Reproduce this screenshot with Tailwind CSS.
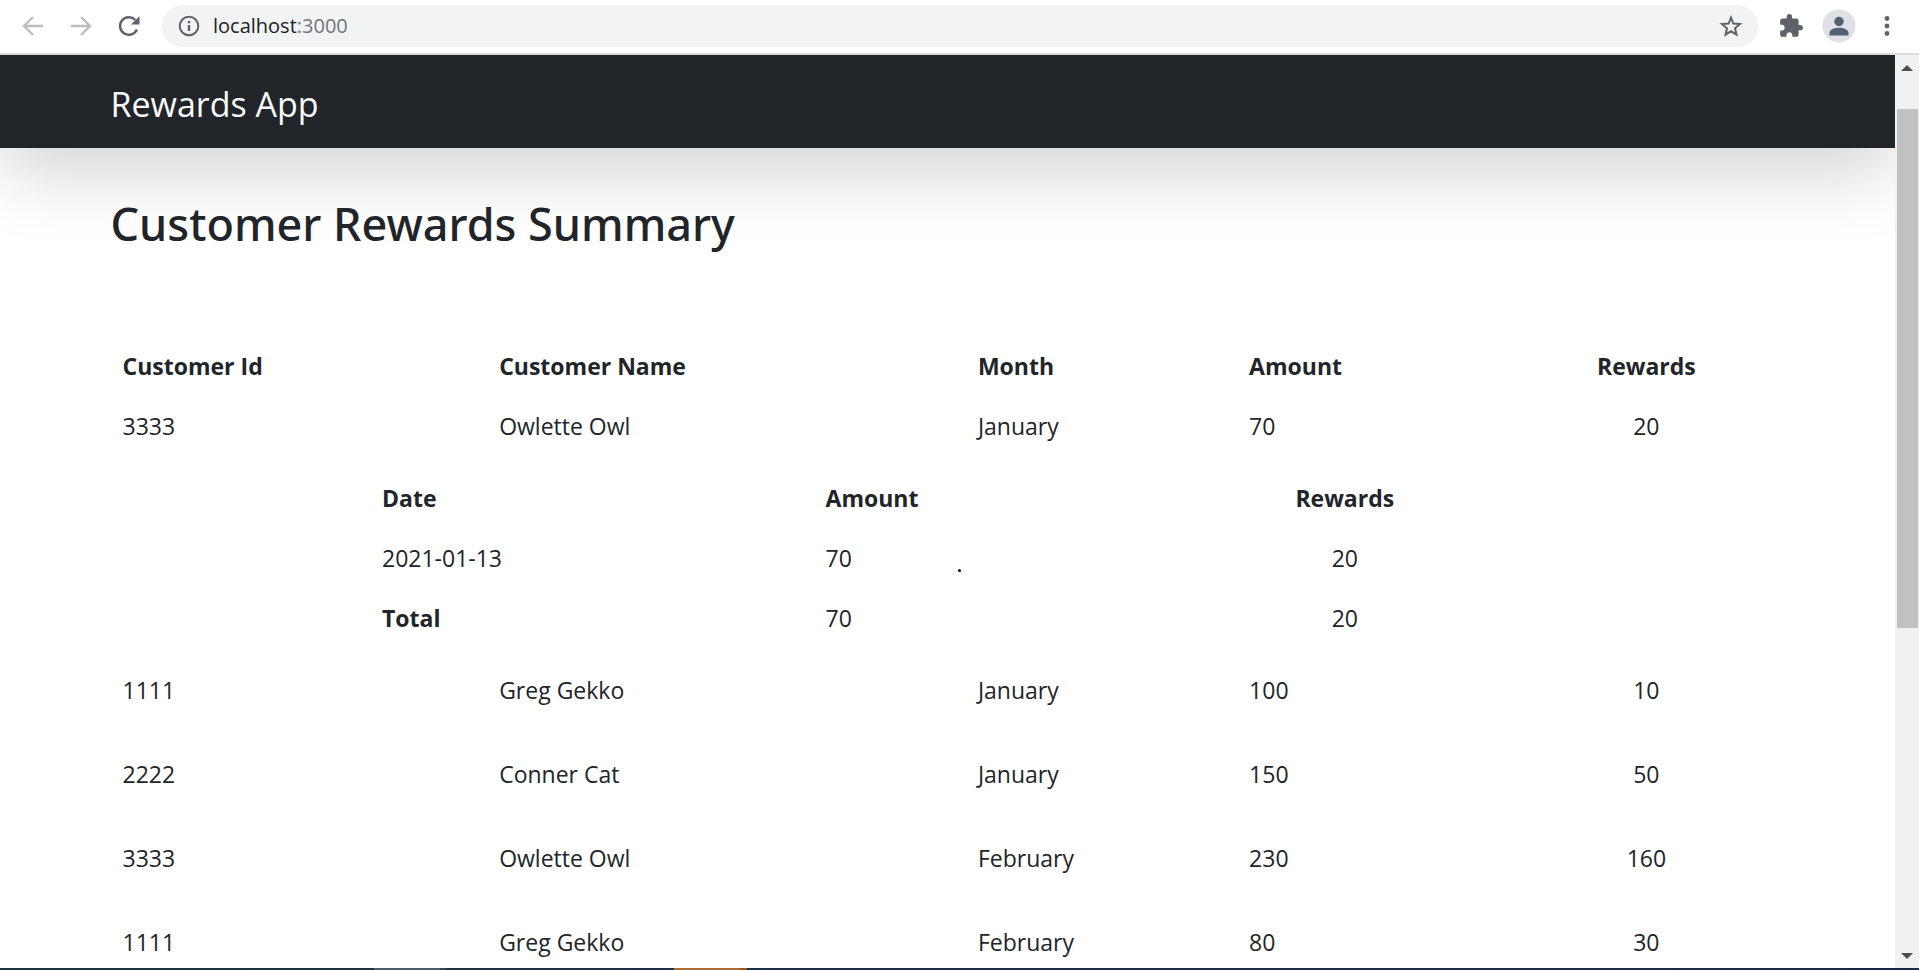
<!DOCTYPE html>
<html lang="en">
<head>
<meta charset="utf-8">
<title>Rewards App</title>
<script src="https://cdn.jsdelivr.net/npm/@tailwindcss/browser@4"></script>
</head>
<body class="flex h-screen flex-col overflow-hidden bg-white font-['Segoe_UI','Open_Sans','Noto_Sans',sans-serif] text-[#212529]">

<!-- Browser toolbar -->
<div class="flex shrink-0 items-center gap-[18px] border-b-2 border-[#dadbdd] pt-[5px] pb-[6px] pr-[17px] pl-[18px]">
  <button aria-label="Back" class="size-[30px] text-[#babcbe]">
    <svg viewBox="0 0 30 30" class="size-full" fill="none" stroke="currentColor" stroke-width="2.4"><path d="M25 15H6.500M15 6l-9 9 9 9"/></svg>
  </button>
  <button aria-label="Forward" class="size-[30px] text-[#babcbe]">
    <svg viewBox="0 0 30 30" class="size-full" fill="none" stroke="currentColor" stroke-width="2.4"><path d="M5 15h18.500M15 6l9 9-9 9"/></svg>
  </button>
  <button aria-label="Reload" class="size-[30px] text-[#5f6368]">
    <svg viewBox="0 0 30 30" class="size-full"><path d="M22.900 18.500a8.800 8.800 0 1 1-1.700-9.600" fill="none" stroke="currentColor" stroke-width="2.400"/><path d="M25.500 5v8.500H17z" fill="currentColor"/></svg>
  </button>
  <div class="flex h-[42px] flex-1 items-center justify-between rounded-full bg-[#f1f3f4] px-[15px]">
    <div class="flex items-center gap-3">
      <button aria-label="View site information" class="size-[24px] text-[#5f6368]">
        <svg viewBox="0 0 24 24" class="size-full" fill="currentColor"><circle cx="12" cy="12" r="9.300" fill="none" stroke="currentColor" stroke-width="2"/><path d="M10.800 11h2.400v6h-2.400zM10.800 7h2.400v2.300h-2.400z"/></svg>
      </button>
      <div role="textbox" contenteditable="true" spellcheck="false" aria-label="Address" class="text-[20px] leading-7 text-[#202124]">localhost<span class="text-[#70757a]">:3000</span></div>
    </div>
    <button aria-label="Bookmark this page" class="size-[24px] text-[#5f6368]">
      <svg viewBox="0 0 24 24" class="size-full" fill="none" stroke="currentColor" stroke-width="2"><path d="M12 3.500l2.300 6 6.700.6-5 4.200 1.500 6.400L12 17.300l-5.500 3.400L8 14.300 3 10.100l6.700-.6z"/></svg>
    </button>
  </div>
  <button aria-label="Extensions" class="size-[30px] text-[#5f6368]">
    <svg viewBox="0 0 24 24" class="mx-[2px] size-[26px]" fill="currentColor"><path d="M20.500 11H19V7c0-1.100-.9-2-2-2h-4V3.500a2.500 2.500 0 0 0-5 0V5H4c-1.100 0-1.990.9-1.990 2v3.800H3.500c1.490 0 2.700 1.210 2.700 2.700s-1.210 2.700-2.700 2.700H2V20c0 1.100.9 2 2 2h3.800v-1.500c0-1.490 1.210-2.700 2.700-2.700s2.700 1.210 2.700 2.700V22H17c1.100 0 2-.9 2-2v-4h1.500a2.500 2.500 0 0 0 0-5z"/></svg>
  </button>
  <button aria-label="Profile" class="size-[30px]">
    <svg viewBox="0 0 30 30" class="size-full overflow-visible"><circle cx="15" cy="15" r="16.500" fill="#dee1e6"/><g fill="#566073"><circle cx="15" cy="10.500" r="4.700"/><path d="M5.500 24.500v-2.600c0-3.300 5-5.200 9.500-5.200s9.500 1.900 9.500 5.200v2.600z"/></g></svg>
  </button>
  <button aria-label="Menu" class="size-[30px] text-[#5f6368]">
    <svg viewBox="0 0 30 30" class="size-full" fill="currentColor"><circle cx="15" cy="7.500" r="2.400"/><circle cx="15" cy="15" r="2.400"/><circle cx="15" cy="22.500" r="2.400"/></svg>
  </button>
</div>

<div class="flex min-h-0 flex-1">
  <!-- Page -->
  <div class="min-w-0 flex-1 overflow-hidden">
    <nav class="bg-[#212529] shadow-[0_24px_72px_rgba(0,0,0,0.175)]">
      <div class="mx-auto max-w-[1710px] px-[18px] pt-[22px] pb-[17px]">
        <a href="#" class="block text-[34px] leading-[54px] text-[#f8f9fa]">Rewards App</a>
      </div>
    </nav>
    <main class="relative mx-auto max-w-[1710px] px-[18px]">
      <h1 class="pt-[47px] pb-[83px] font-['Segoe_UI','Noto_Sans',sans-serif] text-[45px] leading-[58px] font-medium">Customer Rewards Summary</h1>
      <table class="w-full table-fixed text-left text-[23px] leading-9 [&_td]:p-3 [&_th]:p-3 [&_th]:font-bold">
        <colgroup><col class="w-[22.5%]"><col class="w-[28.6%]"><col class="w-[16.2%]"><col class="w-[16.2%]"><col class="w-[16.5%]"></colgroup>
        <thead>
          <tr><th>Customer Id</th><th>Customer Name</th><th>Month</th><th>Amount</th><th class="text-center">Rewards</th></tr>
        </thead>
        <tbody>
          <tr><td>3333</td><td>Owlette Owl</td><td>January</td><td>70</td><td class="text-center">20</td></tr>
          <tr>
            <td colspan="5">
              <table class="mx-auto w-[70%] table-fixed">
                <colgroup><col class="w-[38.4%]"><col class="w-[30.4%]"><col class="w-[31.2%]"></colgroup>
                <thead><tr><th>Date</th><th>Amount</th><th class="text-center">Rewards</th></tr></thead>
                <tbody>
                  <tr><td>2021-01-13</td><td>70</td><td class="text-center">20</td></tr>
                  <tr><th>Total</th><td>70</td><td class="text-center">20</td></tr>
                </tbody>
              </table>
            </td>
          </tr>
          <tr><td>1111</td><td>Greg Gekko</td><td>January</td><td>100</td><td class="text-center">10</td></tr>
          <tr><td colspan="5"></td></tr>
          <tr><td>2222</td><td>Conner Cat</td><td>January</td><td>150</td><td class="text-center">50</td></tr>
          <tr><td colspan="5"></td></tr>
          <tr><td>3333</td><td>Owlette Owl</td><td>February</td><td>230</td><td class="text-center">160</td></tr>
          <tr><td colspan="5"></td></tr>
          <tr><td>1111</td><td>Greg Gekko</td><td>February</td><td>80</td><td class="text-center">30</td></tr>
        </tbody>
      </table>
      <!-- Pointer mark -->
      <span class="absolute top-[421px] left-1/2 ml-[10px] size-[3px] rounded-full bg-black"></span>
    </main>
  </div>

  <!-- Scrollbar -->
  <div class="flex w-6 shrink-0 flex-col items-center bg-[#f1f1f1] pt-[10px] pb-[9px]">
    <svg viewBox="0 0 12 6" class="h-[6px] w-3" fill="#505050"><path d="M6 0l6 6H0z"/></svg>
    <div class="mt-[38px] h-[519px] w-[21px] bg-[#c1c1c1]"></div>
    <svg viewBox="0 0 12 6" class="mt-auto h-[6px] w-3" fill="#505050"><path d="M6 6l6-6H0z"/></svg>
  </div>
</div>

<!-- Taskbar edge -->
<div class="flex h-[2px] shrink-0 bg-linear-to-r from-[#1f3540] to-[#1b2748]">
  <div class="ml-[19.5%] w-[66px] bg-[#4c5d66]"></div>
  <div class="w-[7px] bg-[#364750]"></div>
  <div class="ml-[11.8%] w-[66px] bg-[#b06c30]"></div>
  <div class="w-[7px] bg-[#98561f]"></div>
</div>
</body>
</html>
